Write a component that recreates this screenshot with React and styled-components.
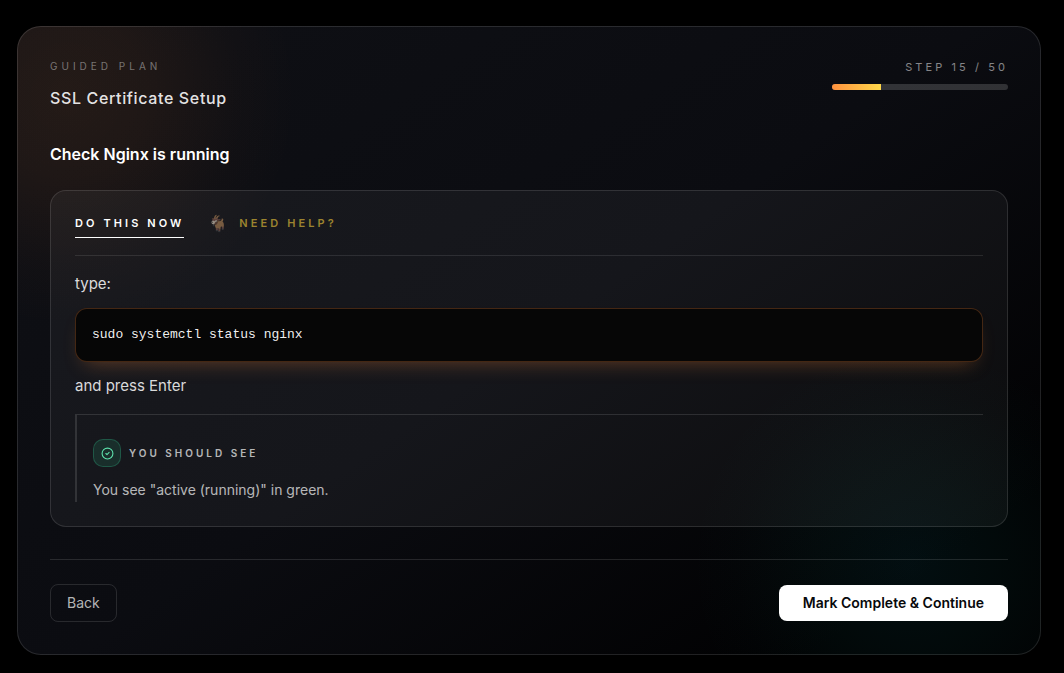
import { useState } from "react";
import { styled, createGlobalStyle } from "styled-components";
import { CircleCheck } from "lucide-react";

const GlobalStyle = createGlobalStyle`
  * {
    box-sizing: border-box;
  }

  body {
    margin: 0;
    background: #000;
    color: #fff;
    font-family: Inter, "Liberation Sans", sans-serif;
  }

  h1, h2, p, pre {
    margin: 0;
  }

  button {
    font-family: inherit;
    cursor: pointer;
  }
`;

const Page = styled.main`
  padding: 26px 23px 18px 17px;
`;

const Card = styled.section`
  padding: 32px;
  border: 1px solid rgba(255, 255, 255, 0.12);
  border-radius: 24px;
  background:
    radial-gradient(circle 230px at 50px 70px, rgba(255, 140, 50, 0.09) 0%, rgba(255, 135, 50, 0.07) 35%, rgba(255, 130, 50, 0.02) 75%, transparent 100%) border-box,
    radial-gradient(circle 220px at calc(100% - 130px) calc(100% - 90px), rgba(20, 170, 190, 0.08) 0%, rgba(20, 170, 160, 0.05) 40%, rgba(20, 170, 160, 0.01) 80%, transparent 100%) border-box,
    linear-gradient(145deg, #0f1015 0%, #0b0c11 50%, #010102 88%) border-box;
`;

const Header = styled.header`
  display: flex;
  justify-content: space-between;
  align-items: flex-start;
`;

const Eyebrow = styled.p`
  font-size: 10px;
  line-height: 15px;
  letter-spacing: 4px;
  text-transform: uppercase;
  color: rgba(255, 255, 255, 0.4);
`;

const Title = styled.h1`
  margin-top: 12px;
  font-size: 16px;
  font-weight: 500;
  line-height: 24px;
  letter-spacing: 0.04em;
  color: rgba(255, 255, 255, 0.9);
`;

const Progress = styled.div`
  display: flex;
  flex-direction: column;
  align-items: flex-end;
  gap: 8px;
`;

const StepLabel = styled.span`
  font-size: 11px;
  line-height: 17px;
  letter-spacing: 0.28em;
  text-transform: uppercase;
  color: rgba(255, 255, 255, 0.5);
`;

const Track = styled.div`
  width: 176px;
  height: 6px;
  border-radius: 3px;
  overflow: hidden;
  background: rgba(255, 255, 255, 0.16);
`;

const Fill = styled.div`
  height: 100%;
  background: linear-gradient(90deg, #ff923f, #ffd84a);
`;

const StepTitle = styled.h2`
  margin-top: 32px;
  font-size: 16px;
  font-weight: 600;
  line-height: 24px;
`;

const Panel = styled.div`
  margin-top: 24px;
  padding: 24px;
  border: 1px solid rgba(255, 255, 255, 0.12);
  border-radius: 16px;
  background: rgba(255, 255, 255, 0.045);
`;

const Tabs = styled.div`
  display: flex;
  align-items: flex-start;
  gap: 24px;
  padding-bottom: 17px;
  border-bottom: 1px solid rgba(255, 255, 255, 0.1);
`;

const Tab = styled.button`
  display: flex;
  align-items: center;
  gap: 8px;
  height: 23px;
  padding: 0 0 5px;
  border: none;
  border-bottom: 1px solid ${({ $active }) => ($active ? "#fff" : "transparent")};
  background: none;
  font-size: 11px;
  font-weight: 600;
  line-height: 17px;
  letter-spacing: 0.28em;
  text-transform: uppercase;
  color: ${({ $tone }) => ($tone === "gold" ? "#9c842f" : "#fff")};
`;

const Goat = styled.span`
  font-family: "Noto Color Emoji", sans-serif;
  font-size: 16px;
  opacity: 0.6;
`;

const Line = styled.p`
  font-size: 15px;
  line-height: 24px;
  color: rgba(255, 255, 255, 0.85);
`;

const Instructions = styled.div`
  display: flex;
  flex-direction: column;
  gap: 12px;
  padding: 16px 0;
`;

const Command = styled.pre`
  padding: 16px;
  border: 1px solid rgba(255, 140, 60, 0.25);
  border-radius: 12px;
  background: #060606;
  box-shadow: 0 10px 20px -10px rgba(255, 140, 60, 0.35);
  font-family: "Liberation Mono", monospace;
  font-size: 13px;
  line-height: 20px;
  color: rgba(255, 255, 255, 0.95);
  overflow-x: auto;
`;

const Expected = styled.div`
  padding: 24px 0 0 16px;
  border-top: 1px solid rgba(255, 255, 255, 0.12);
  border-left: 2px solid rgba(255, 255, 255, 0.12);
`;

const ExpectedHead = styled.div`
  display: flex;
  align-items: center;
  gap: 8px;
  font-size: 10px;
  font-weight: 600;
  line-height: 15px;
  letter-spacing: 3px;
  text-transform: uppercase;
  color: rgba(255, 255, 255, 0.7);
`;

const Badge = styled.span`
  display: grid;
  place-items: center;
  width: 28px;
  height: 28px;
  border: 1px solid rgba(52, 211, 153, 0.25);
  border-radius: 10px;
  background: rgba(52, 211, 153, 0.12);
  color: #5ee0ac;
`;

const ExpectedText = styled.p`
  margin-top: 11px;
  font-size: 14px;
  line-height: 24px;
  color: rgba(255, 255, 255, 0.7);
`;

const Footer = styled.footer`
  display: flex;
  justify-content: space-between;
  align-items: center;
  margin-top: 32px;
  padding-top: 24px;
  border-top: 1px solid rgba(255, 255, 255, 0.12);
`;

const BackButton = styled.button`
  padding: 8px 16px;
  border: 1px solid rgba(255, 255, 255, 0.12);
  border-radius: 8px;
  background: transparent;
  font-size: 14px;
  line-height: 20px;
  color: rgba(255, 255, 255, 0.7);
`;

const NextButton = styled.button`
  padding: 8px 24px;
  border: none;
  border-radius: 8px;
  background: #fff;
  font-size: 14px;
  font-weight: 600;
  line-height: 20px;
  color: #08090b;
`;

export default function App() {
  const [tab, setTab] = useState("do");
  const step = 15;
  const total = 50;

  return (
    <>
      <GlobalStyle />
      <Page>
        <Card>
          <Header>
            <div>
              <Eyebrow>Guided plan</Eyebrow>
              <Title>SSL Certificate Setup</Title>
            </div>
            <Progress>
              <StepLabel id="step-label">Step {step} / {total}</StepLabel>
              <Track
                role="progressbar"
                aria-labelledby="step-label"
                aria-valuenow={step - 1}
                aria-valuemin={0}
                aria-valuemax={total}
              >
                <Fill style={{ width: `${((step - 1) / total) * 100}%` }} />
              </Track>
            </Progress>
          </Header>
          <StepTitle>Check Nginx is running</StepTitle>
          <Panel>
            <Tabs>
              <Tab $active={tab === "do"} onClick={() => setTab("do")}>
                Do this now
              </Tab>
              <Tab $tone="gold" $active={tab === "help"} onClick={() => setTab("help")}>
                <Goat aria-hidden="true">🐐</Goat>
                Need help?
              </Tab>
            </Tabs>
            <Instructions>
              <Line>type:</Line>
              <Command>sudo systemctl status nginx</Command>
              <Line>and press Enter</Line>
            </Instructions>
            <Expected>
              <ExpectedHead>
                <Badge>
                  <CircleCheck size={13} />
                </Badge>
                You should see
              </ExpectedHead>
              <ExpectedText>You see "active (running)" in green.</ExpectedText>
            </Expected>
          </Panel>
          <Footer>
            <BackButton>Back</BackButton>
            <NextButton>Mark Complete & Continue</NextButton>
          </Footer>
        </Card>
      </Page>
    </>
  );
}
